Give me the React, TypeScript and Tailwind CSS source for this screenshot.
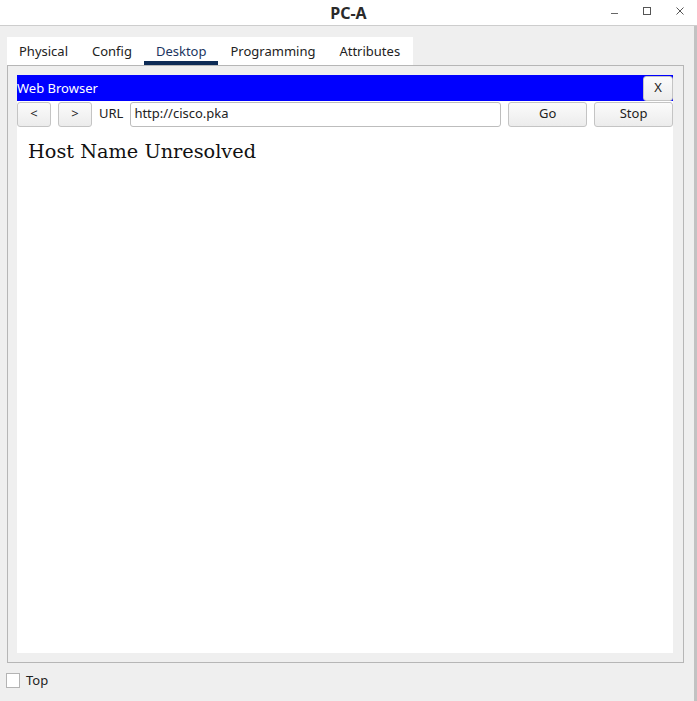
const tabs = ['Physical', 'Config', 'Desktop', 'Programming', 'Attributes']

function ToolButton({ label, className = '' }: { label: string; className?: string }) {
  return (
    <button
      type="button"
      className={`flex h-[25px] items-center justify-center rounded-[3px] border border-[#c4c4c4] bg-gradient-to-b from-[#fbfbfb] to-[#ececec] text-[13px] text-[#222] ${className}`}
    >
      {label}
    </button>
  )
}

export default function App() {
  return (
    <div className="flex h-[701px] w-[697px] flex-col bg-[#efefef] font-['Noto_Sans',sans-serif] text-[13px] text-[#222]">
      {/* Title bar */}
      <div className="relative flex h-[26px] shrink-0 items-center justify-center border-b border-[#cdcdcd] bg-white">
        <span className="text-[16px] font-bold text-[#2a2a2a]">PC-A</span>
        <div className="absolute top-[7px] right-[13px] flex items-start text-[#555]">
          <span className="mt-[6px] block h-px w-[7px] bg-[#666]" />
          <span className="ml-[25px] block h-[8px] w-[8px] border border-[#555]" />
          <svg className="ml-[25px]" width="8" height="8" viewBox="0 0 8 8" stroke="#555" strokeWidth="1">
            <path d="M0.5 0.5L7.5 7.5M7.5 0.5L0.5 7.5" />
          </svg>
        </div>
      </div>

      <div className="flex flex-1 border-r-[3px] border-[#c2c2c2]">
        <div className="flex flex-1 flex-col pl-[7px] pt-[11px]">
          {/* Tabs */}
          <div className="flex h-[28px] w-[406px] bg-white">
            {tabs.map((t) => (
              <div
                key={t}
                className={`relative flex items-center px-3 pt-[1px] ${t === 'Desktop' ? 'text-[#1c3560]' : 'text-[#222]'}`}
              >
                {t}
                {t === 'Desktop' && <span className="absolute bottom-0 left-0 h-[4px] w-full bg-[#0c2a55]" />}
              </div>
            ))}
          </div>

          {/* Panel */}
          <div className="flex h-[598px] w-[677px] flex-col border border-[#b6b6b6] py-[9px] pl-[9px] pr-[10px]">
            <div className="flex flex-1 flex-col bg-white">
              <div className="flex h-[26px] items-center justify-between bg-[#0000ff]">
                <span className="pt-[1px] text-white">Web Browser</span>
                <ToolButton label="X" className="w-[30px]" />
              </div>
              <div className="flex h-[26px] items-center gap-[7px]">
                <ToolButton label="<" className="w-[34px]" />
                <ToolButton label=">" className="w-[34px]" />
                <span>URL</span>
                <div className="flex h-[25px] w-[371px] items-center rounded-[3px] border border-[#bdbdbd] bg-white pl-[3px]">
                  http://cisco.pka
                </div>
                <ToolButton label="Go" className="w-[79px]" />
                <ToolButton label="Stop" className="w-[79px]" />
              </div>
              <div className="px-[11px] pt-[11px] font-['DejaVu_Serif',serif] text-[19.3px] text-[#111]">
                Host Name Unresolved
              </div>
            </div>
          </div>

          {/* Bottom */}
          <div className="mt-[8px] -ml-[1px] flex items-center gap-[6px]">
            <span className="block h-[15px] w-[14px] border border-[#b4b4b4] bg-white" />
            <span>Top</span>
          </div>
        </div>
      </div>
    </div>
  )
}
